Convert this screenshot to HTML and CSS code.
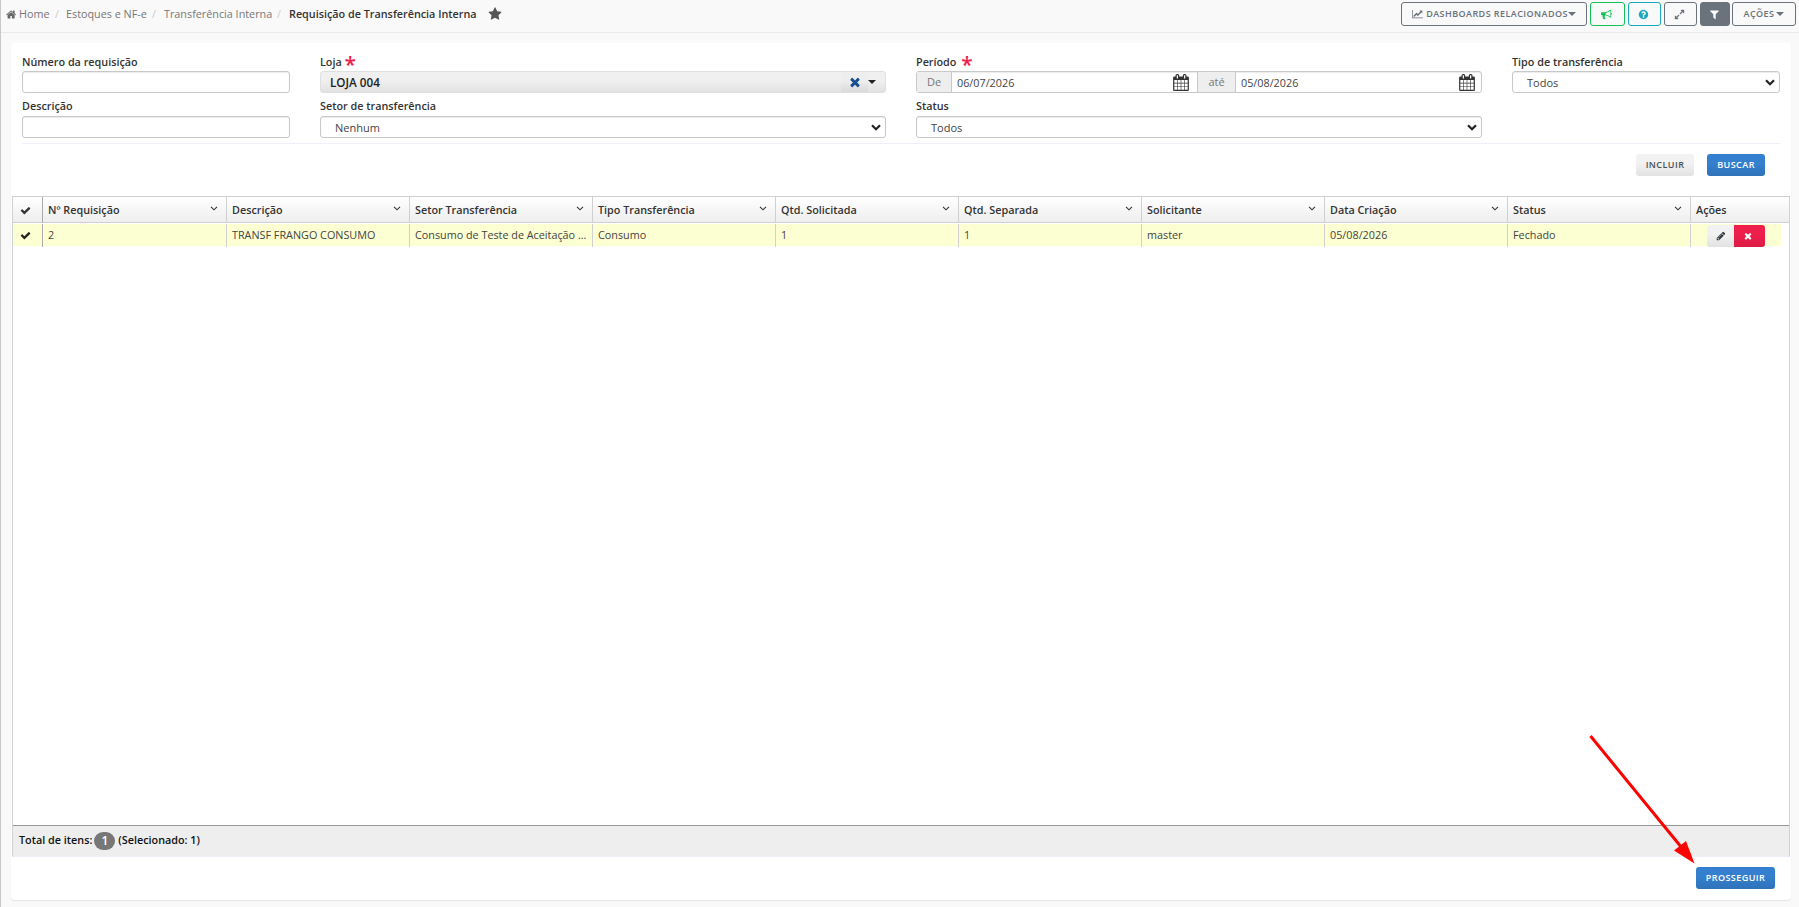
FILE: index.html
```html
<!DOCTYPE html>
<html lang="pt-BR">
<head>
<meta charset="utf-8">
<title>Requisição de Transferência Interna</title>
<link rel="stylesheet" href="styles.css">
</head>
<body>
<svg class="defs" width="0" height="0">
<symbol id="home" viewBox="0 0 1792 1792"><path d="M1408 992v480q0 26-19 45t-45 19h-384v-384h-256v384h-384q-26 0-45-19t-19-45v-480q0-1 .5-3t.5-3l575-474 575 474q1 2 1 6zm223-69l-62 74q-8 9-21 11h-3q-13 0-21-7l-692-577-692 577q-12 8-24 7-13-2-21-11l-62-74q-8-10-7-23.5t11-21.5l719-599q32-26 76-26t76 26l244 204v-195q0-14 9-23t23-9h192q14 0 23 9t9 23v408l219 182q10 8 11 21.5t-7 23.5z"/></symbol>
<symbol id="star" viewBox="0 0 1792 1792"><path d="M1728 647q0 22-26 48l-363 354 86 500q1 7 1 20 0 21-10.500 35.500t-30.500 14.500q-19 0-40-12l-449-236-449 236q-22 12-40 12-21 0-31.500-14.500t-10.500-35.500q0-6 2-20l86-500-364-354q-25-27-25-48 0-37 56-46l502-73 225-455q19-41 49-41t49 41l225 455 502 73q56 9 56 46z"/></symbol>
<symbol id="check" viewBox="0 0 1792 1792"><path d="M1671 566q0 40-28 68l-724 724-136 136q-28 28-68 28t-68-28l-136-136-362-362q-28-28-28-68t28-68l136-136q28-28 68-28t68 28l294 295 656-657q28-28 68-28t68 28l136 136q28 28 28 68z"/></symbol>
<symbol id="times" viewBox="0 0 1792 1792"><path d="M1490 1322q0 40-28 68l-136 136q-28 28-68 28t-68-28l-294-294-294 294q-28 28-68 28t-68-28l-136-136q-28-28-28-68t28-68l294-294-294-294q-28-28-28-68t28-68l136-136q28-28 68-28t68 28l294 294 294-294q28-28 68-28t68 28l136 136q28 28 28 68t-28 68l-294 294 294 294q28 28 28 68z"/></symbol>
<symbol id="pencil" viewBox="0 0 1792 1792"><path d="M491 1536l91-91-235-235-91 91v107h128v128h107zm523-928q0-22-22-22-10 0-17 7l-542 542q-7 7-7 17 0 22 22 22 10 0 17-7l542-542q7-7 7-17zm-54-192l416 416-832 832h-416v-416zm683 96q0 53-37 90l-166 166-416-416 166-165q36-38 90-38 53 0 91 38l235 234q37 39 37 91z"/></symbol>
<symbol id="filter" viewBox="0 0 1792 1792"><path d="M1595 295q17 41-14 70l-493 493v742q0 42-39 59-13 5-25 5-27 0-45-19l-256-256q-19-19-19-45v-486l-493-493q-31-29-14-70 17-39 59-39h1280q42 0 59 39z"/></symbol>
<symbol id="expand" viewBox="0 0 1792 1792"><path d="M883 1056q0 13-10 23l-332 332 144 144q19 19 19 45t-19 45-45 19h-448q-26 0-45-19t-19-45v-448q0-26 19-45t45-19 45 19l144 144 332-332q10-10 23-10t23 10l114 114q10 10 10 23zm781-864v448q0 26-19 45t-45 19-45-19l-144-144-332 332q-10 10-23 10t-23-10l-114-114q-10-10-10-23t10-23l332-332-144-144q-19-19-19-45t19-45 45-19h448q26 0 45 19t19 45z"/></symbol>
<symbol id="question" viewBox="0 0 1792 1792"><path d="M1024 1376v-192q0-14-9-23t-23-9h-192q-14 0-23 9t-9 23v192q0 14 9 23t23 9h192q14 0 23-9t9-23zm256-672q0-88-55.500-163t-138.500-116-170-41q-243 0-371 213-15 24 8 42l132 100q7 6 19 6 16 0 25-12 53-68 86-92 34-24 86-24 48 0 85.500 26t37.500 59q0 38-20 61t-68 45q-63 28-115.500 86.500t-52.500 125.500v36q0 14 9 23t23 9h192q14 0 23-9t9-23q0-19 21.500-49.500t54.500-49.500q32-18 49-28.500t46-35 44.500-48 28-60.500 12.500-81zm384 192q0 209-103 385.500t-279.500 279.500-385.500 103-385.500-103-279.500-279.500-103-385.500 103-385.500 279.500-279.500 385.500-103 385.500 103 279.500 279.500 103 385.500z"/></symbol>
<symbol id="bullhorn" viewBox="0 0 1792 1792"><path d="M1664 640q53 0 90.500 37.500t37.500 90.500-37.500 90.500-90.500 37.500v384q0 52-38 90t-90 38q-417-347-812-380-58 19-91 66t-31 100.500 40 92.500q-20 33-23 65.500t6 58 33.500 55 48 50 61.500 50.500q-29 58-111.500 83t-168.500 11.500-132-55.500q-7-23-29.500-87.500t-32-94.500-23-89-15-101 3.500-98.500 22-110.500h-122q-66 0-113-47t-47-113v-192q0-66 47-113t113-47h480q435 0 896-384 52 0 90 38t38 90v384zm-128 604v-954q-394 302-768 343v270q377 42 768 341z"/></symbol>
<symbol id="chart" viewBox="0 0 2048 1792"><path d="M2048 1536v128h-2048v-1536h128v1408h1920zm-128-1248v435q0 21-19.500 29.500t-35.500-7.500l-121-121-633 633q-10 10-23 10t-23-10l-233-233-416 416-192-192 585-585q10-10 23-10t23 10l233 233 464-464-121-121q-16-16-7.500-35.500t29.500-19.500h435q14 0 23 9t9 23z"/></symbol>
<symbol id="calendar" viewBox="64 0 1664 1792"><path d="M192 1664h288v-288h-288v288zm352 0h320v-288h-320v288zm-352-352h288v-320h-288v320zm352 0h320v-320h-320v320zm-352-384h288v-288h-288v288zm736 736h320v-288h-320v288zm-384-736h320v-288h-320v288zm768 736h288v-288h-288v288zm-384-352h320v-320h-320v320zm-352-864v-288q0-13-9.500-22.500t-22.500-9.500h-64q-13 0-22.500 9.500t-9.500 22.500v288q0 13 9.500 22.500t22.500 9.500h64q13 0 22.500-9.500t9.500-22.500zm736 864h288v-320h-288v320zm-384-384h320v-288h-320v288zm384 0h288v-288h-288v288zm32-480v-288q0-13-9.500-22.500t-22.500-9.500h-64q-13 0-22.500 9.500t-9.500 22.500v288q0 13 9.500 22.500t22.500 9.500h64q13 0 22.500-9.500t9.500-22.500zm384-64v1280q0 52-38 90t-90 38h-1408q-52 0-90-38t-38-90v-1280q0-52 38-90t90-38h128v-96q0-66 47-113t113-47h64q66 0 113 47t47 113v96h384v-96q0-66 47-113t113-47h64q66 0 113 47t47 113v96h128q52 0 90 38t38 90z"/></symbol>
<symbol id="down" viewBox="0 0 8 5"><path d="M1 .8l3 3 3-3" fill="none" stroke="currentColor" stroke-width="1.100"/></symbol>
<symbol id="selarrow" viewBox="0 0 10 7"><path d="M1 1.200l4 4 4-4" fill="none" stroke="currentColor" stroke-width="2.200"/></symbol>
</svg>

<div class="page">
<header class="topbar">
  <nav class="crumbs">
    <svg class="i-home"><use href="#home"/></svg><a class="c1">Home</a><i class="s1">/</i><a class="c2">Estoques e NF-e</a><i class="s2">/</i><a class="c3">Transferência Interna</a><i class="s3">/</i><b>Requisição de Transferência Interna</b><svg class="i-star"><use href="#star"/></svg>
  </nav>
  <div class="tools">
    <button class="tool dash"><svg class="i-chart"><use href="#chart"/></svg><span>DASHBOARDS RELACIONADOS</span><i class="caret"></i></button>
    <button class="tool horn"><svg class="i11"><use href="#bullhorn"/></svg></button>
    <button class="tool help"><svg class="i11"><use href="#question"/></svg></button>
    <button class="tool full"><svg class="i11"><use href="#expand"/></svg></button>
    <button class="tool filt"><svg class="i11"><use href="#filter"/></svg></button>
    <button class="tool acts"><span>AÇÕES</span><i class="caret"></i></button>
  </div>
</header>

<main class="panel">
  <form class="filters">
    <div class="field"><label>Número da requisição</label><div class="ctl"></div></div>
    <div class="field"><label>Loja <em>*</em></label><div class="store"><strong>LOJA 004</strong><span class="clear"><svg><use href="#times"/></svg></span><i class="caret"></i></div></div>
    <div class="field"><label>Período <em class="wide">*</em></label>
      <div class="ctl period"><span class="addon de">De</span><span class="date d1">06/07/2026<svg><use href="#calendar"/></svg></span><span class="addon ate">até</span><span class="date d2">05/08/2026<svg><use href="#calendar"/></svg></span></div></div>
    <div class="field"><label>Tipo de transferência</label><div class="ctl sel">Todos<svg><use href="#selarrow"/></svg></div></div>
    <div class="field second"><label>Descrição</label><div class="ctl"></div></div>
    <div class="field second"><label>Setor de transferência</label><div class="ctl sel">Nenhum<svg><use href="#selarrow"/></svg></div></div>
    <div class="field second"><label>Status</label><div class="ctl sel">Todos<svg><use href="#selarrow"/></svg></div></div>
  </form>
  <div class="actions"><button class="btn light">INCLUIR</button><button class="btn blue">BUSCAR</button></div>

  <section class="grid">
    <div class="row head">
      <div class="mark"><svg><use href="#check"/></svg></div>
      <div>Nº Requisição<svg><use href="#down"/></svg></div>
      <div>Descrição<svg><use href="#down"/></svg></div>
      <div>Setor Transferência<svg><use href="#down"/></svg></div>
      <div>Tipo Transferência<svg><use href="#down"/></svg></div>
      <div>Qtd. Solicitada<svg><use href="#down"/></svg></div>
      <div>Qtd. Separada<svg><use href="#down"/></svg></div>
      <div>Solicitante<svg><use href="#down"/></svg></div>
      <div>Data Criação<svg><use href="#down"/></svg></div>
      <div>Status<svg><use href="#down"/></svg></div>
      <div class="last">Ações</div>
    </div>
    <div class="row item">
      <div class="mark"><svg><use href="#check"/></svg></div>
      <div>2</div>
      <div>TRANSF FRANGO CONSUMO</div>
      <div>Consumo de Teste de Aceitação ...</div>
      <div>Consumo</div>
      <div>1</div>
      <div>1</div>
      <div>master</div>
      <div>05/08/2026</div>
      <div>Fechado</div>
      <div class="last"><button class="edit"><svg><use href="#pencil"/></svg></button><button class="del"><svg><use href="#times"/></svg></button></div>
    </div>
    <div class="space"></div>
    <footer class="total"><span>Total de itens:</span><span class="badge">1</span><span>(Selecionado: 1)</span></footer>
  </section>
  <div class="proceed"><button class="btn blue go">PROSSEGUIR</button></div>
</main>
</div>
<svg class="pointer" viewBox="0 0 110 132"><path d="M3.500 3L95 115" stroke="#f00" stroke-width="3" fill="none"/><path d="M107.500 130.500L87 117.500L99 108z" fill="#f00"/></svg>
</body>
</html>
```
FILE: styles.css
```css
* { box-sizing: border-box; }
body { margin: 0; font: 10.800px/18px "Open Sans", sans-serif; color: #333; background: #f9f9f9; overflow: hidden; }
svg { fill: currentColor; flex: none; }
button { font-family: inherit; padding: 0; margin: 0; border: 0; }
.defs { position: absolute; }
.page { height: 907px; border-left: 1px solid #c8c8c8; }

.topbar { height: 33px; border-bottom: 1px solid #e9e9e9; display: flex; justify-content: space-between; padding: 2px 3px 0 5px; }
.crumbs { display: flex; align-items: center; height: 24px; color: #777; white-space: nowrap; }
.crumbs i { font-style: normal; color: #ccc; width: 4px; }
.i-home { width: 11px; height: 11px; margin-right: 2px; color: #666; }
.c1 { width: 36px; }
.s1 { margin-right: 7px; }
.c2 { width: 86px; }
.s2 { margin-right: 8px; }
.c3 { width: 113px; }
.s3 { margin-right: 8px; }
.crumbs b { font-weight: 600; color: #333; width: 199px; }
.i-star { width: 14px; height: 14px; color: #555; margin-bottom: 1px; }

.tools { display: flex; height: 24px; }
.tool { height: 24px; border: 1px solid #6a727b; border-radius: 3px; background: transparent; color: #6a727b; display: flex; align-items: center; justify-content: center; font-size: 9px; font-weight: 600; letter-spacing: .44px; white-space: nowrap; }
.tool span { padding-bottom: 1px; }
.i11 { width: 11px; height: 11px; }
.i-chart { width: 11px; height: 10px; margin-right: 3px; }
.caret { width: 0; border: 4px solid transparent; border-top-color: currentColor; border-bottom: 0; }
.dash { width: 186px; margin-right: 3px; }
.horn { width: 35px; margin-right: 3px; color: #13c257; border-color: #13c257; }
.horn svg { margin-right: 3px; }
.help { width: 33px; margin-right: 3px; color: #17a9bd; border-color: #17a9bd; }
.help svg, .full svg { margin-right: 3px; }
.full { width: 33px; margin-right: 3px; }
.filt { width: 30px; margin-right: 2px; background: #6a727b; color: #fff; }
.filt svg { margin-right: 1px; }
.acts { width: 64px; }
.acts .caret { margin-left: 2px; }

.panel { margin: 10px 8px 0 10px; height: 857px; background: #fff; border-radius: 4px; box-shadow: 0 1px 1px #e4e4e4; }
.filters { display: grid; grid-template-columns: 268px 566px 566px 268px; column-gap: 30px; grid-template-rows: 45px 45px; margin: 0 11px; padding-top: 10px; height: 101px; border-bottom: 1px solid #eef; }
.field { display: flex; flex-direction: column; }
.field label { height: 18px; font-weight: 600; line-height: 18px; white-space: pre; }
.field.second label { line-height: 16px; }
.field label em { display: inline-block; height: 10px; font: 600 21px/10px "Open Sans", sans-serif; color: #ee1f4b; vertical-align: -6px; margin-left: 0; }
.field label em.wide { margin-left: 2px; }
.ctl, .store { height: 22px; border: 1px solid #c8c8c8; border-radius: 3px; display: flex; box-shadow: inset 0 1px 1px #ececec; }
.sel { padding: 1px 4px 0 14px; justify-content: space-between; line-height: 20px; font-size: 11px; color: #444; }
.sel svg { width: 10px; height: 7px; margin-top: 6px; color: #222; }
.store { border-color: #e0e0e0; background: linear-gradient(#f0f0f0 40%, #e2e2e2); align-items: center; box-shadow: none; color: #222; padding-left: 9px; }
.store strong { font-weight: 600; flex: 1; font-size: 11.700px; padding-bottom: 1px; }
.clear { width: 27px; height: 20px; display: flex; align-items: center; justify-content: center; color: #1b4f8f; background: linear-gradient(#eee 45%, #d9d9d9); }
.clear svg { width: 14px; height: 14px; }
.store .caret { margin: 0 9px 0 0; }
.addon { background: #eee; color: #777; text-align: center; line-height: 20px; font-size: 11px; }
.de { width: 35px; border-right: 1px solid #c8c8c8; }
.ate { width: 39px; border: solid #c8c8c8; border-width: 0 1px; }
.date { display: flex; justify-content: space-between; line-height: 22px; padding: 0 8px 0 5px; color: #444; }
.date svg { width: 16px; height: 17px; margin-top: 2px; color: #333; }
.d1 { width: 245px; }
.d2 { flex: 1; padding-right: 6px; }

.actions { height: 52px; padding: 10px 26px 0 0; display: flex; justify-content: flex-end; gap: 13px; }
.btn { height: 22px; width: 58px; border-radius: 3px; font-size: 9px; font-weight: 600; letter-spacing: .45px; line-height: 20px; padding-bottom: 1px; }
.light { background: linear-gradient(#f2f2f2 40%, #e2e2e2); color: #495057; }
.blue { background: linear-gradient(#3580ce 40%, #2f72b9); color: #fff; }

.grid { margin: 0 0 0 1px; width: 1778px; height: 661px; border: 1px solid #d0d0d0; border-bottom-color: #eef; display: flex; flex-direction: column; }
.row { display: grid; grid-template-columns: 30px 184px repeat(8, 183px) 1fr; }
.row > div { border-right: 1px solid #d0d0d0; padding-left: 5px; white-space: nowrap; display: flex; justify-content: space-between; position: relative; }
.row .mark { padding: 0 4px 0 0; align-items: center; justify-content: center; border-right-color: #aaa; }
.mark svg { width: 11px; height: 11px; }
.row .last { border-right: 0; }
.head { height: 26px; background: linear-gradient(#fff, #eee); border-bottom: 1px solid #d0d0d0; font-weight: 600; line-height: 26px; margin-bottom: 1px; }
.head div:not(.mark) svg { width: 8px; height: 5px; margin: 9px 8px 0 0; }
.item { height: 22px; width: 1768px; background: #fcffd2; line-height: 22px; color: #444; }
.item .mark { color: #222; }
.item .last { padding: 1px 0 0 16px; justify-content: flex-start; }
.item button { height: 22px; display: flex; align-items: center; justify-content: center; }
.item button svg { width: 10px; height: 10px; }
.item .edit { width: 27px; border-radius: 3px 0 0 3px; background: linear-gradient(#f2f2f2 40%, #e2e2e2); color: #343a44; }
.item .del { width: 31px; border-radius: 0 3px 3px 0; background: linear-gradient(#ee1f4b 40%, #dc1c45); color: #fff; }
.item .del svg { margin-right: 3px; }
.space { flex: 1; }
.total { height: 31px; border-top: 1px solid #999; background: #eee; display: flex; align-items: center; padding: 0 0 2px 6px; font-weight: 600; color: #111; }
.badge { width: 21px; height: 18px; border-radius: 9px; background: #777; color: #fff; text-align: center; font-size: 12px; margin: 1px 3px 0 2px; }
.proceed { display: flex; justify-content: flex-end; padding: 10px 16px 0 0; }
.go { width: 79px; }
.pointer { position: absolute; left: 1587px; top: 733px; width: 110px; height: 132px; }
```
